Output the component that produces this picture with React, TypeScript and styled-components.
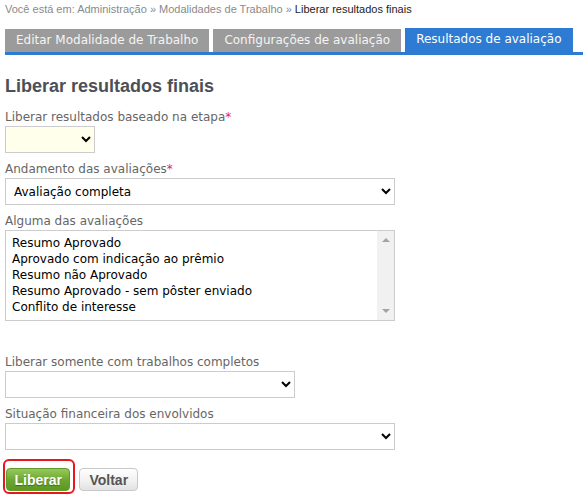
import React from "react";
import styled, { createGlobalStyle } from "styled-components";

const Global = createGlobalStyle`
  html, body { margin: 0; padding: 0; background: #fff; }
  body { font-family: "DejaVu Sans", Verdana, sans-serif; }
`;

const Page = styled.div`
  padding: 0 0 0 5px;
  width: 578px;
`;

const Breadcrumb = styled.div`
  font-family: "Liberation Sans", Arial, sans-serif;
  font-size: 11px;
  line-height: 16px;
  color: #8a8a8a;
  padding-top: 1px;
  height: 27px;
`;

const Current = styled.span`
  color: #222;
`;

const TabBar = styled.div`
  display: flex;
  gap: 4px;
  border-bottom: 3px solid #2d7bd2;
`;

const Tab = styled.div<{ $active?: boolean }>`
  font-family: "DejaVu Sans", Verdana, sans-serif;
  font-size: 12px;
  line-height: 23px;
  padding: 0 11px;
  color: ${(p) => (p.$active ? "#fff" : "#f4f4f4")};
  background: ${(p) => (p.$active ? "#2d7bd2" : "#9b9b9b")};
  margin-top: ${(p) => (p.$active ? "0" : "1px")};
  height: ${(p) => (p.$active ? "24px" : "23px")};
`;

const Title = styled.h2`
  font-family: "Liberation Sans", Arial, sans-serif;
  font-size: 18px;
  font-weight: bold;
  color: #4b5058;
  margin: 21px 0 0;
  line-height: 20px;
`;

const Form = styled.div`
  margin-top: 12px;
`;

const Field = styled.div<{ $gap?: number }>`
  margin-bottom: ${(p) => p.$gap ?? 7}px;
`;

const Label = styled.label`
  display: block;
  font-size: 12px;
  line-height: 18px;
  color: #666;
`;

const Req = styled.span`
  color: #e0245e;
`;

const Select = styled.select<{ $w: number; $bg?: string }>`
  display: block;
  width: ${(p) => p.$w}px;
  height: 27px;
  border: 1px solid #ccc;
  border-radius: 0;
  background: ${(p) => p.$bg ?? "#fff"};
  font-family: "DejaVu Sans", Verdana, sans-serif;
  font-size: 12px;
  color: #000;
  padding: 0 4px;
  margin: 0;
  outline: none;
`;

const ListBox = styled.div`
  display: flex;
  width: 390px;
  height: 91px;
  box-sizing: border-box;
  border: 1px solid #ccc;
  background: #fff;
`;

const Options = styled.div`
  flex: 1;
  padding: 4px 6px;
`;

const Option = styled.div`
  font-size: 12px;
  line-height: 16px;
  color: #000;
  white-space: nowrap;
`;

const ScrollTrack = styled.div`
  width: 17px;
  background: #f1f1f1;
  display: flex;
  flex-direction: column;
  justify-content: space-between;
  align-items: center;
  padding: 7px 0 7px;
`;

const Arrow = styled.span<{ $down?: boolean }>`
  width: 0;
  height: 0;
  border-left: 4px solid transparent;
  border-right: 4px solid transparent;
  ${(p) =>
    p.$down
      ? "border-top: 4px solid #a3a3a3;"
      : "border-bottom: 4px solid #a3a3a3;"}
`;

const Actions = styled.div`
  display: flex;
  align-items: flex-start;
  gap: 4px;
  margin-top: 9px;
`;

const Highlight = styled.div`
  border: 2px solid #e8161d;
  border-radius: 6px;
  padding: 7px 3px 1px 1px;
  margin-left: -2px;
`;

const Button = styled.button<{ $primary?: boolean }>`
  font-family: "Liberation Sans", Arial, sans-serif;
  font-size: 14px;
  font-weight: bold;
  height: 23px;
  padding: 0 ${(p) => (p.$primary ? "7.5px" : "9px")};
  border-radius: 4px;
  cursor: pointer;
  border: 1px solid ${(p) => (p.$primary ? "#5e9a2c" : "#c8c8c8")};
  color: ${(p) => (p.$primary ? "#fff" : "#555")};
  text-shadow: ${(p) => (p.$primary ? "0 1px 1px rgba(0,0,0,0.35)" : "none")};
  background: ${(p) =>
    p.$primary
      ? "linear-gradient(#96c95a, #6aa630 55%, #5c9824)"
      : "linear-gradient(#ffffff, #f0f0f0 60%, #e2e2e2)"};
`;

const Voltar = styled(Button)`
  margin-top: 9px;
`;

const items = [
  "Resumo Aprovado",
  "Aprovado com indicação ao prêmio",
  "Resumo não Aprovado",
  "Resumo Aprovado - sem pôster enviado",
  "Conflito de interesse",
];

export default function App() {
  return (
    <>
      <Global />
      <Page>
        <Breadcrumb>
          Você está em: Administração » Modalidades de Trabalho »{" "}
          <Current>Liberar resultados finais</Current>
        </Breadcrumb>
        <TabBar>
          <Tab>Editar Modalidade de Trabalho</Tab>
          <Tab>Configurações de avaliação</Tab>
          <Tab $active>Resultados de avaliação</Tab>
        </TabBar>
        <Title>Liberar resultados finais</Title>
        <Form>
          <Field>
            <Label>
              Liberar resultados baseado na etapa<Req>*</Req>
            </Label>
            <Select $w={90} $bg="#ffffeb" defaultValue="">
              <option value=""></option>
            </Select>
          </Field>
          <Field>
            <Label>
              Andamento das avaliações<Req>*</Req>
            </Label>
            <Select $w={390} defaultValue="c">
              <option value="c">Avaliação completa</option>
            </Select>
          </Field>
          <Field $gap={32}>
            <Label>Alguma das avaliações</Label>
            <ListBox role="listbox" aria-multiselectable="true">
              <Options>
                {items.map((t) => (
                  <Option key={t} role="option">
                    {t}
                  </Option>
                ))}
              </Options>
              <ScrollTrack>
                <Arrow />
                <Arrow $down />
              </ScrollTrack>
            </ListBox>
          </Field>
          <Field>
            <Label>Liberar somente com trabalhos completos</Label>
            <Select $w={290} defaultValue="">
              <option value=""></option>
            </Select>
          </Field>
          <Field>
            <Label>Situação financeira dos envolvidos</Label>
            <Select $w={390} defaultValue="">
              <option value=""></option>
            </Select>
          </Field>
          <Actions>
            <Highlight>
              <Button $primary>Liberar</Button>
            </Highlight>
            <Voltar>Voltar</Voltar>
          </Actions>
        </Form>
      </Page>
    </>
  );
}
